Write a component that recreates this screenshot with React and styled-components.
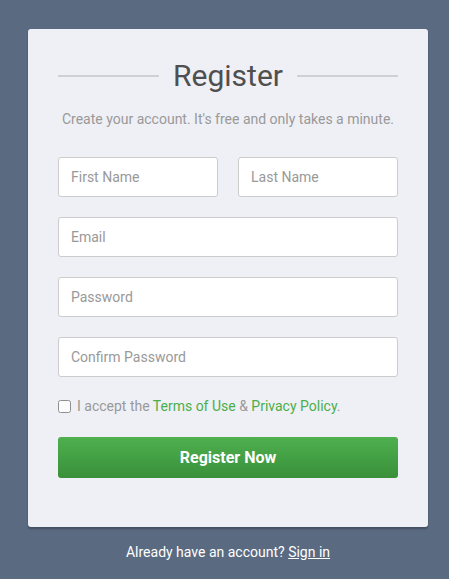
import React from 'react';
import styled, { createGlobalStyle } from 'styled-components';

const GlobalStyle = createGlobalStyle`
  html, body {
    margin: 0;
    padding: 0;
    background: #5a6a81;
    font-family: Roboto, "Liberation Sans", sans-serif;
  }
  * {
    box-sizing: border-box;
  }
`;

const Page = styled.div`
  width: 449px;
  min-height: 579px;
  padding: 29px 0 0 28px;
`;

const Column = styled.div`
  width: 400px;
  display: flex;
  flex-direction: column;
  align-items: center;
`;

const Card = styled.form`
  width: 400px;
  background: #eff0f5;
  border-radius: 3px;
  box-shadow: 0 2px 2px rgba(0, 0, 0, 0.25);
  padding: 28px 30px 49px;
  display: flex;
  flex-direction: column;
`;

const TitleRow = styled.div`
  display: flex;
  align-items: center;
  gap: 14px;
  height: 38px;
`;

const Rule = styled.span`
  flex: 1;
  height: 2px;
  background: #cfd0d4;
`;

const Title = styled.h2`
  margin: 0;
  font-size: 30px;
  font-weight: 400;
  color: #4f4f4f;
  line-height: 38px;
`;

const Hint = styled.p`
  margin: 15px 0 0;
  text-align: center;
  font-size: 14px;
  color: #999;
  line-height: 18px;
`;

const Fields = styled.div`
  margin-top: 29px;
  display: flex;
  flex-direction: column;
  gap: 20px;
`;

const Row = styled.div`
  display: flex;
  gap: 20px;

  & > input {
    flex: 1;
    min-width: 0;
  }
`;

const Input = styled.input`
  display: block;
  width: 100%;
  height: 40px;
  border: 1px solid #ccc;
  border-radius: 3px;
  background: #fff;
  padding: 0 12px;
  font-family: Roboto, "Liberation Sans", sans-serif;
  font-size: 14px;
  color: #555;
  outline: none;

  &::placeholder {
    color: #999;
  }
`;

const Accept = styled.label`
  margin-top: 19px;
  display: flex;
  align-items: center;
  gap: 6px;
  font-size: 14px;
  color: #999;
  height: 20px;
`;

const Box = styled.input`
  margin: 0;
  width: 13px;
  height: 13px;
  opacity: 0.8;
`;

const Green = styled.a`
  color: #4aae4a;
  text-decoration: none;
`;

const Submit = styled.button`
  margin-top: 21px;
  height: 41px;
  border: none;
  border-radius: 3px;
  background: linear-gradient(to bottom, #4eb04f, #3a9039);
  color: #fff;
  font-family: Roboto, "Liberation Sans", sans-serif;
  font-size: 16px;
  font-weight: 700;
  cursor: pointer;
`;

const Footer = styled.p`
  margin: 15px 0 0;
  color: #fff;
  font-size: 14px;
  line-height: 20px;
`;

const SignIn = styled.a`
  color: #fff;
  text-decoration: underline;
`;

export default function App() {
  return (
    <Page>
      <GlobalStyle />
      <Column>
        <Card onSubmit={(e) => e.preventDefault()}>
          <TitleRow>
            <Rule />
            <Title>Register</Title>
            <Rule />
          </TitleRow>
          <Hint>Create your account. It's free and only takes a minute.</Hint>
          <Fields>
            <Row>
              <Input placeholder="First Name" />
              <Input placeholder="Last Name" />
            </Row>
            <Input type="email" placeholder="Email" />
            <Input type="password" placeholder="Password" />
            <Input type="password" placeholder="Confirm Password" />
          </Fields>
          <Accept>
            <Box type="checkbox" />
            <span>
              I accept the <Green href="#">Terms of Use</Green> &amp; <Green href="#">Privacy Policy</Green>.
            </span>
          </Accept>
          <Submit type="submit">Register Now</Submit>
        </Card>
        <Footer>
          Already have an account? <SignIn href="#">Sign in</SignIn>
        </Footer>
      </Column>
    </Page>
  );
}
